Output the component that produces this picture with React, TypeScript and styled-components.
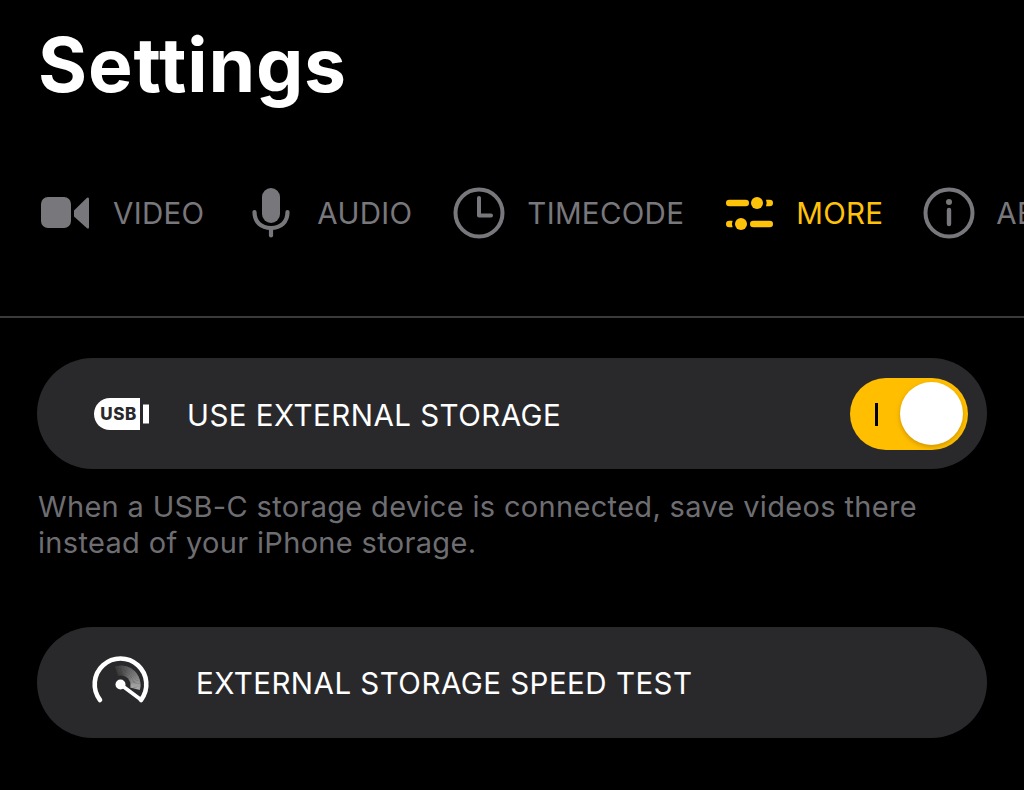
import React from "react";
import styled, { createGlobalStyle } from "styled-components";

const Global = createGlobalStyle`
  html, body { margin: 0; padding: 0; background: #000; }
  body { width: 1024px; height: 790px; overflow: hidden; font-family: Inter, "Liberation Sans", sans-serif; }
`;

const Page = styled.div`
  width: 1024px;
  height: 790px;
  background: #000;
  overflow: hidden;
  display: flex;
  flex-direction: column;
`;

const Title = styled.h1`
  margin: 0;
  padding: 20px 0 0 38px;
  height: 134px;
  box-sizing: border-box;
  font-size: 75px;
  line-height: 90px;
  font-weight: 700;
  letter-spacing: 0.8px;
  color: #fff;
`;

const TabStrip = styled.nav`
  height: 184px;
  box-sizing: border-box;
  padding: 48px 0 0 40px;
  display: flex;
  align-items: flex-start;
  border-bottom: 2px solid #3a3a3c;
  overflow: hidden;
  white-space: nowrap;
`;

const Tab = styled.div<{ $active?: boolean; $gap: number; $after: number }>`
  display: flex;
  align-items: center;
  height: 62px;
  flex: none;
  gap: ${(p) => p.$gap}px;
  margin-right: ${(p) => p.$after}px;
  color: ${(p) => (p.$active ? "#ffc20a" : "#78787c")};
  font-size: 29.5px;
  font-weight: 400;
  letter-spacing: 0.3px;
`;

const Content = styled.main`
  padding: 40px 37px 0;
  display: flex;
  flex-direction: column;
`;

const Row = styled.div<{ $labelGap: number; $inset: number }>`
  height: 111px;
  border-radius: 56px;
  background: #29292c;
  display: flex;
  align-items: center;
  padding: 0 19px 0 ${(p) => p.$inset}px;
  gap: ${(p) => p.$labelGap}px;
  color: #fff;
  font-size: 29.5px;
  letter-spacing: 0.48px;
`;

const RowLabel = styled.span<{ $drop: number }>`
  flex: 1;
  margin-top: ${(p) => p.$drop}px;
`;

const Toggle = styled.div`
  position: relative;
  width: 118px;
  height: 72px;
  border-radius: 36px;
  background: #ffbf00;
  display: flex;
  align-items: center;
  justify-content: flex-end;
  padding: 0 5px;
  box-sizing: border-box;
`;

const ToggleMark = styled.span`
  position: absolute;
  left: 25px;
  top: 25px;
  width: 2.5px;
  height: 23px;
  background: #000;
`;

const Knob = styled.span`
  width: 63px;
  height: 63px;
  border-radius: 50%;
  background: #fff;
  box-shadow: 0 2px 5px rgba(170, 115, 0, 0.55);
`;

const Description = styled.p`
  margin: 0;
  padding: 20px 0 0 1px;
  height: 158px;
  box-sizing: border-box;
  color: #6e6e72;
  font-size: 29px;
  line-height: 36px;
  letter-spacing: 0.33px;
`;

const GaugeSvg = styled.svg`
  flex: none;
  margin-bottom: 7px;
  overflow: visible;
`;

const UsbSvg = styled.svg`
  flex: none;
`;

const G = "currentColor";

const VideoIcon = () => (
  <svg width="50" height="36" viewBox="0 0 50 36" fill={G}>
    <rect x="1" y="2" width="30" height="31" rx="7" />
    <path d="M34 15.5 L47 2.8 Q49 1.6 49 4 L49 32 Q49 34.6 47 33.2 L34 21.5 Z" />
  </svg>
);

const MicIcon = () => (
  <svg width="38" height="50" viewBox="0 0 38 50" fill="none">
    <rect x="10" y="0" width="18" height="35" rx="9" fill={G} />
    <path d="M2.5 24 C2.5 34 9 40 19 40 C29 40 35.5 34 35.5 24" stroke={G} strokeWidth="4.2" strokeLinecap="round" />
    <path d="M19 40 V47.5" stroke={G} strokeWidth="4.2" strokeLinecap="round" />
  </svg>
);

const ClockIcon = () => (
  <svg width="52" height="52" viewBox="0 0 52 52" fill="none">
    <circle cx="26" cy="26" r="23.5" stroke={G} strokeWidth="4" />
    <path d="M26 11 V28.5 H38" stroke={G} strokeWidth="4" strokeLinecap="round" strokeLinejoin="round" />
  </svg>
);

const SlidersIcon = () => (
  <svg width="48" height="34" viewBox="0 0 48 34" fill={G}>
    <rect x="0" y="3.7" width="23" height="6.6" rx="3.3" />
    <circle cx="31" cy="7" r="6" />
    <path d="M40 3.7 H43.7 Q47 3.7 47 7 Q47 10.3 43.7 10.3 H40 Q41.4 7 40 3.7 Z" />
    <path d="M6.6 24.7 H3.3 Q0 24.7 0 28 Q0 31.3 3.3 31.3 H6.6 Q5.2 28 6.6 24.7 Z" />
    <circle cx="15" cy="28" r="6" />
    <rect x="24" y="24.7" width="23" height="6.6" rx="3.3" />
  </svg>
);

const InfoIcon = () => (
  <svg width="52" height="52" viewBox="0 0 52 52" fill="none">
    <circle cx="26" cy="26" r="23.5" stroke={G} strokeWidth="4" />
    <circle cx="26" cy="15" r="3" fill={G} />
    <path d="M26 23 V37" stroke={G} strokeWidth="4.4" strokeLinecap="round" />
  </svg>
);

const UsbIcon = () => (
  <UsbSvg width="58" height="34" viewBox="0 0 58 34">
    <path d="M17 1 H47 V33 H17 C8 33 1 26 1 17 C1 8 8 1 17 1 Z" fill="#fff" />
    <rect x="50" y="7.5" width="6" height="19" fill="#fff" />
    <text x="25.5" y="23.2" textAnchor="middle" fontFamily="Inter, sans-serif" fontWeight="800" fontSize="17" fill="#29292c" letterSpacing="0.5">USB</text>
  </UsbSvg>
);

const arcPoint = (cx: number, cy: number, r: number, deg: number) => {
  const a = ((deg - 90) * Math.PI) / 180;
  return [cx + r * Math.cos(a), cy + r * Math.sin(a)];
};

const GaugeSegments = () => {
  const segments = [];
  const start = -18;
  const end = 105;
  const n = 24;
  for (let i = 0; i < n; i++) {
    const a0 = start + ((end - start) * i) / n;
    const a1 = start + ((end - start) * (i + 1.15)) / n;
    const [x0, y0] = arcPoint(29, 29, 14.5, a0);
    const [x1, y1] = arcPoint(29, 29, 14.5, Math.min(a1, end));
    const level = Math.round(60 + (i / (n - 1)) * 110);
    segments.push(
      <path
        key={i}
        d={`M${x0} ${y0} A14.5 14.5 0 0 1 ${x1} ${y1}`}
        stroke={`rgb(${level},${level},${level})`}
        strokeWidth="10"
        fill="none"
      />
    );
  }
  return <>{segments}</>;
};

const GaugeIcon = () => (
  <GaugeSvg width="58" height="46" viewBox="0 0 58 46" fill="none">
    <GaugeSegments />
    <path d="M8 44 A25.8 25.8 0 1 1 49 44" stroke="#fff" strokeWidth="4.6" strokeLinecap="round" />
    <circle cx="28.5" cy="28.5" r="5" fill="#fff" />
    <path d="M28.5 28.5 L48 43" stroke="#fff" strokeWidth="3.6" strokeLinecap="round" />
  </GaugeSvg>
);

export default function App() {
  return (
    <Page>
      <Global />
      <Title>Settings</Title>
      <TabStrip>
        <Tab $gap={23} $after={48}><VideoIcon />VIDEO</Tab>
        <Tab $gap={27} $after={41}><MicIcon />AUDIO</Tab>
        <Tab $gap={22} $after={42}><ClockIcon />TIMECODE</Tab>
        <Tab $active $gap={22} $after={40}><SlidersIcon />MORE</Tab>
        <Tab $gap={21} $after={0}><InfoIcon />ABOUT</Tab>
      </TabStrip>
      <Content>
        <Row $labelGap={36} $inset={56}>
          <UsbIcon />
          <RowLabel $drop={2}>USE EXTERNAL STORAGE</RowLabel>
          <Toggle>
            <ToggleMark />
            <Knob />
          </Toggle>
        </Row>
        <Description>
          When a USB-C storage device is connected, save videos there
          <br />
          instead of your iPhone storage.
        </Description>
        <Row $labelGap={46} $inset={55}>
          <GaugeIcon />
          <RowLabel $drop={0}>EXTERNAL STORAGE SPEED TEST</RowLabel>
        </Row>
      </Content>
    </Page>
  );
}
